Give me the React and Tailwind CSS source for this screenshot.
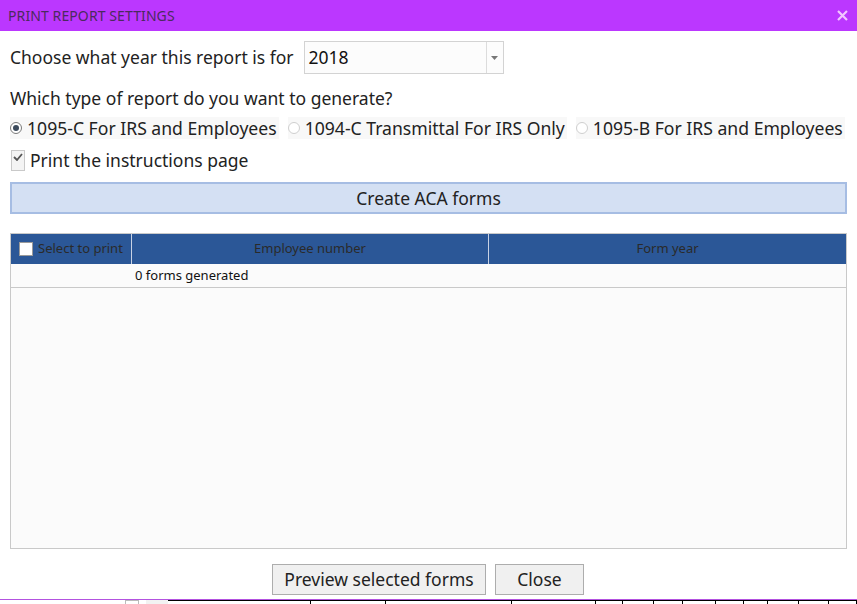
import React from 'react';

const font = { fontFamily: '"Noto Sans", "Open Sans", sans-serif' };

const Radio = ({ checked, label }) => (
  <label className="flex items-center h-[22px] bg-[#f8f8f8] pr-[2px] shrink-0 whitespace-nowrap">
    <span className={`w-[12px] h-[12px] rounded-full border flex items-center justify-center bg-white ${checked ? 'border-[#7a7a7a]' : 'border-[#cfcfcf]'}`}>
      {checked && <span className="w-[6px] h-[6px] rounded-full bg-[#3c4a5c]" />}
    </span>
    <span className="ml-[5px] text-[17.6px] text-[#222]">{label}</span>
  </label>
);

const App = () => {
  return (
    <div className="w-[857px] h-[604px] bg-white flex flex-col overflow-hidden" style={font}>
      {/* title bar */}
      <div className="h-[31px] bg-[#bb37ff] flex items-center justify-between pl-[8px] pr-[9px]">
        <span className="text-[14px] text-[#4b2a5e] tracking-[0.1px]">PRINT REPORT SETTINGS</span>
        <svg width="11" height="11" viewBox="0 0 11 11">
          <path d="M1 1 L10 10 M10 1 L1 10" stroke="#f1c6ff" strokeWidth="2.2" />
        </svg>
      </div>

      <div className="px-[10px] flex flex-col">
        <div className="mt-[10px] flex items-center h-[33px]">
          <span className="text-[17.5px] text-[#222]">Choose what year this report is for</span>
          <div className="ml-[10px] w-[200px] h-[33px] border border-[#d3d3d3] bg-[#fcfcfc] flex items-center">
            <span className="flex-1 pl-[4px] text-[17.5px] text-[#111]">2018</span>
            <div className="w-[17px] h-full border-l border-[#dcdcdc] flex items-center justify-center">
              <svg width="7" height="4" viewBox="0 0 7 4"><path d="M0 0 H7 L3.5 4 Z" fill="#777" /></svg>
            </div>
          </div>
        </div>

        <div className="mt-[12px] h-[24px] flex items-center text-[17.5px] text-[#222]">
          Which type of report do you want to generate?
        </div>

        <div className="mt-[7px] flex items-center gap-[9px]">
          <Radio checked label="1095-C For IRS and Employees" />
          <Radio label="1094-C Transmittal For IRS Only" />
          <Radio label="1095-B For IRS and Employees" />
        </div>

        <div className="mt-[11px] flex items-center h-[21px]">
          <span className="ml-[1px] w-[14px] h-[21px] border border-[#c9c9c9] bg-[#f4f4f4] flex justify-center pt-[2px]">
            <svg width="10" height="8" viewBox="0 0 10 8"><path d="M1 4 L4 7 L9 1" stroke="#555" strokeWidth="1.8" fill="none" /></svg>
          </span>
          <span className="ml-[5px] text-[17.5px] text-[#222]">Print the instructions page</span>
        </div>

        <button className="mt-[11px] h-[32px] w-full bg-[#d4e0f3] border-2 border-[#a6bde3] text-[17.5px] text-[#222]">
          Create ACA forms
        </button>

        {/* grid */}
        <div className="mt-[19px] h-[316px] border border-[#c9c9c9] bg-[#fbfbfb] flex flex-col">
          <div className="h-[30px] bg-[#2b5797] flex text-[13px] text-[#2a2a2a]">
            <div className="w-[121px] flex items-center pl-[8px] border-r border-[#c8d2e4]">
              <span className="w-[14px] h-[14px] bg-white border border-[#9a9a9a]" />
              <span className="ml-[5px]">Select to print</span>
            </div>
            <div className="w-[357px] flex items-center justify-center border-r border-[#c8d2e4]">Employee number</div>
            <div className="flex-1 flex items-center justify-center">Form year</div>
          </div>
          <div className="h-[24px] flex items-center border-b border-[#c9c9c9] text-[13px] text-[#111]">
            <span className="ml-[124px]">0 forms generated</span>
          </div>
        </div>

        <div className="mt-[15px] flex justify-center gap-[9px] pr-[1px]">
          <button className="h-[31px] w-[214px] bg-[#f0f0f0] border border-[#adadad] text-[17.5px] text-[#222]">Preview selected forms</button>
          <button className="h-[31px] w-[89px] bg-[#f0f0f0] border border-[#adadad] text-[17.5px] text-[#222]">Close</button>
        </div>
      </div>

      {/* window edge / background bleed */}
      <div className="mt-auto h-[5px] flex flex-col">
        <div className="h-[1px] bg-[#b352e0]" />
        <div className="h-[4px] flex items-start">
          <div className="ml-[125px] w-[18px] h-[4px] border-x border-t border-[#bbb]" />
          <div className="ml-[7px] w-[29px] h-[4px] bg-[#f2f2f2]" />
          <div className="flex-1 h-[4px] border-t border-black flex">
            <div className="w-[143px] border-r border-black" />
            <div className="w-[75px] border-r border-black" />
            <div className="w-[126px] border-r border-black" />
            <div className="w-[84px] border-r border-black" />
            <div className="w-[27px] border-r border-black" />
            <div className="w-[31px] border-r border-black" />
            <div className="w-[29px] border-r border-black" />
            <div className="w-[33px] border-r border-black" />
            <div className="w-[28px] border-r border-black" />
            <div className="w-[24px] border-r border-black" />
            <div className="w-[31px] border-r border-black" />
            <div className="w-[30px] border-r border-black" />
            <div className="w-[28px] border-r border-black" />
          </div>
        </div>
      </div>
    </div>
  );
};

export default App;
